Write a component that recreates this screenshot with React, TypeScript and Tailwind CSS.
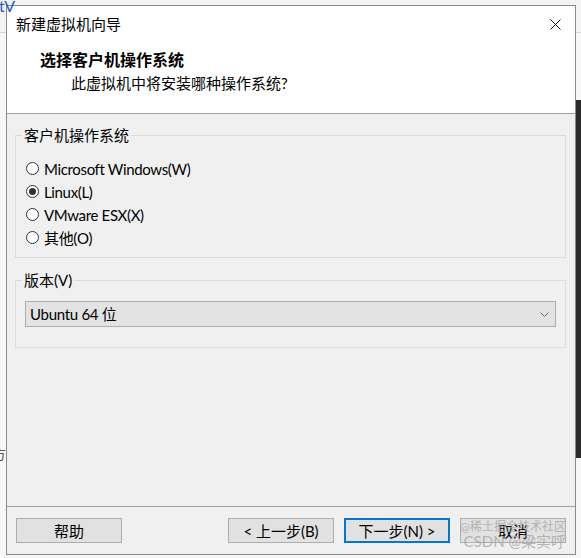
import React from "react";

const font = { fontFamily: 'Lato, "Noto Sans CJK SC", sans-serif' };

function Radio({ label, checked }: { label: string; checked?: boolean }) {
  return (
    <div className="flex h-[23px] items-center">
      <span className="flex h-[13px] w-[13px] items-center justify-center rounded-full border border-[#333] bg-white">
        {checked && <span className="h-[7px] w-[7px] rounded-full bg-[#333]" />}
      </span>
      <span className="ml-[5px] text-[15px] leading-[20px] tracking-[-0.35px] text-black">{label}</span>
    </div>
  );
}

function Btn({ children, primary }: { children: React.ReactNode; primary?: boolean }) {
  return (
    <button
      className={
        primary
          ? "flex h-[25px] w-[106px] items-center justify-center border-2 border-[#0078d7] bg-[#e1e1e1] text-[15px] leading-[20px] text-black"
          : "flex h-[25px] w-[106px] items-center justify-center border border-[#adadad] bg-[#e1e1e1] text-[15px] leading-[20px] text-black"
      }
    >
      {children}
    </button>
  );
}

export default function App() {
  return (
    <div className="relative h-[558px] w-[581px] overflow-hidden bg-[#f7f7f7]" style={font}>
      {/* background desktop pieces */}
      <div className="h-[33px] border-b border-[#d6d6d6] bg-[#f3f3f3]" />
      <div className="absolute right-0 top-[100px] h-[358px] w-[5px] bg-[#2a2a2a]" />
      <span className="absolute left-[-8px] top-[443px] text-[14px] text-[#555]">方</span>

      {/* dialog */}
      <div className="absolute left-[6px] top-[5px] flex h-[550px] w-[570px] flex-col border border-[#8a8a8a] bg-[#f0f0f0]">
        {/* header */}
        <div className="h-[108px] border-b border-[#a0a0a0] bg-white">
          <div className="flex h-[36px] items-center pl-[9px] pr-[14px]">
            <span className="text-[15px] leading-[20px] text-black">新建虚拟机向导</span>
            <svg className="ml-auto" width="11" height="11" viewBox="0 0 11 11">
              <path d="M0.5 0.5 L10.5 10.5 M10.5 0.5 L0.5 10.5" stroke="#111" strokeWidth="1" />
            </svg>
          </div>
          <div className="mt-[7px] pl-[33px] text-[16px] font-bold leading-[22px] text-black">选择客户机操作系统</div>
          <div className="mt-[1px] pl-[64px] text-[15px] leading-[22px] text-black">此虚拟机中将安装哪种操作系统?</div>
        </div>

        {/* body */}
        <div className="flex-1 pl-[8px] pr-[9px]">
          <fieldset className="mt-[11px] border border-[#dcdcdc] pb-[8px]">
            <legend className="ml-[6px] px-[2px] text-[15px] leading-[20px] text-black">客户机操作系统</legend>
            <div className="pl-[10px] pt-[12px]">
              <Radio label="Microsoft Windows(W)" />
              <Radio label="Linux(L)" checked />
              <Radio label="VMware ESX(X)" />
              <Radio label="其他(O)" />
            </div>
          </fieldset>

          <fieldset className="mt-[12px] border border-[#dcdcdc] pb-[20px]">
            <legend className="ml-[6px] px-[2px] text-[15px] leading-[20px] text-black">版本(V)</legend>
            <div className="mx-[9px] mt-[11px] flex h-[26px] items-center border border-[#adadad] bg-[#e3e3e3] pl-[4px] pr-[6px]">
              <span className="text-[15px] leading-[20px] tracking-[-0.3px] text-black">Ubuntu 64 位</span>
              <svg className="ml-auto" width="9" height="5" viewBox="0 0 9 5">
                <path d="M0.5 0.5 L4.5 4.5 L8.5 0.5" fill="none" stroke="#666" strokeWidth="1" />
              </svg>
            </div>
          </fieldset>
        </div>

        {/* footer */}
        <div className="relative flex h-[48px] gap-[10px] border-t border-[#a0a0a0] pl-[9px] pr-[9px] pt-[11px]">
          <Btn>帮助</Btn>
          <div className="ml-auto flex gap-[10px]">
            <Btn>&lt; 上一步(B)</Btn>
            <Btn primary>下一步(N) &gt;</Btn>
            <Btn>取消</Btn>
          </div>
          {/* watermark */}
          <div className="pointer-events-none absolute right-[9px] top-[14px] flex flex-col items-end text-[#a5a5a5]/80">
            <span className="text-[12px] leading-[12px]">@稀土掘金技术社区</span>
            <span className="text-[15px] leading-[16px]">CSDN @梁实呼</span>
          </div>
        </div>
      </div>
      <span className="absolute left-[-1px] top-[-4px] text-[16px] leading-[20px] text-[#1f5fbf]">tV</span>
    </div>
  );
}
